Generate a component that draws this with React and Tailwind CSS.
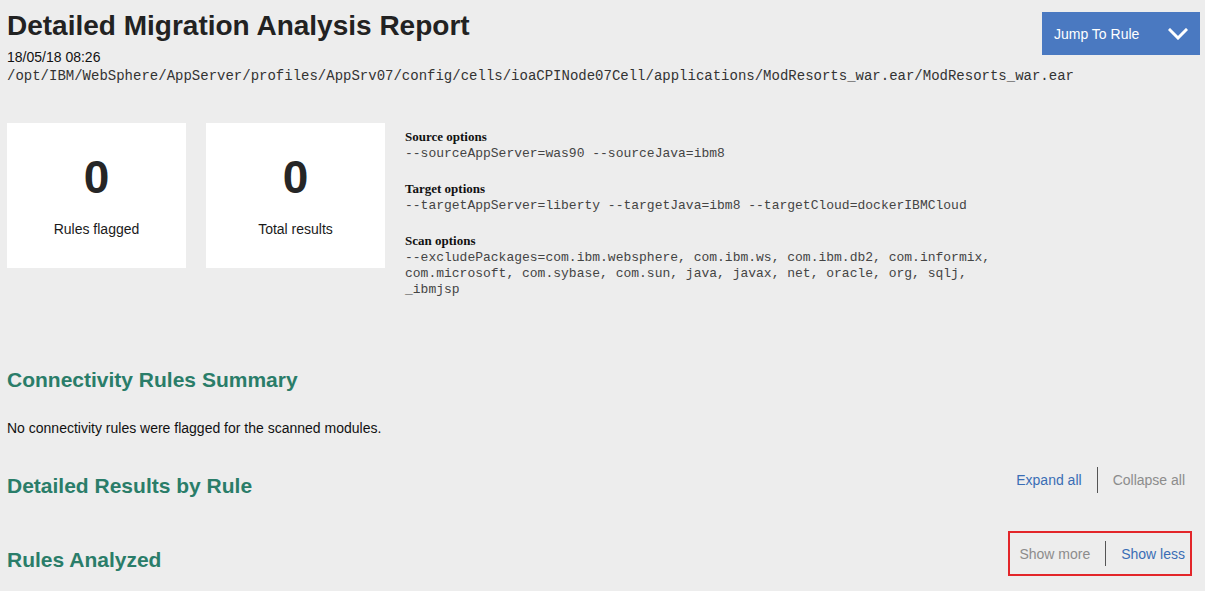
import React from 'react';

const stats = [
  { value: 0, label: 'Rules flagged' },
  { value: 0, label: 'Total results' },
];

const options = [
  { title: 'Source options', lines: ['--sourceAppServer=was90 --sourceJava=ibm8'] },
  { title: 'Target options', lines: ['--targetAppServer=liberty --targetJava=ibm8 --targetCloud=dockerIBMCloud'] },
  {
    title: 'Scan options',
    lines: [
      '--excludePackages=com.ibm.websphere, com.ibm.ws, com.ibm.db2, com.informix,',
      'com.microsoft, com.sybase, com.sun, java, javax, net, oracle, org, sqlj,',
      '_ibmjsp',
    ],
  },
];

const ToggleLinks = ({ left, right, leftActive, boxed }) => (
  <div
    className={`flex items-center text-[14px] ${
      boxed ? 'border-2 border-[#e3262a] pl-[9px] pr-[5px] py-[8px]' : 'pr-[15px]'
    }`}
  >
    <span className={`pr-[15px] leading-[18px] ${leftActive ? 'text-[#3a6db5]' : 'text-[#8c8c8c]'}`}>{left}</span>
    <span className={`w-px bg-[#555] ${boxed ? 'h-[25px]' : 'h-[26px]'}`} />
    <span className={`pl-[15px] leading-[18px] ${leftActive ? 'text-[#8c8c8c]' : 'text-[#3a6db5]'}`}>{right}</span>
  </div>
);

const App = () => {
  return (
    <div className="min-h-screen bg-[#ededed] pl-[7px] pr-[5px] text-[#1a1a1a] font-['Liberation_Sans',Arial,sans-serif]">
      <div className="flex justify-between items-start">
        <div>
          <h1 className="pt-[10px] text-[28px] leading-[32px] font-bold text-[#222]">Detailed Migration Analysis Report</h1>
          <p className="mt-[6px] text-[14px] leading-[18px] text-[#111]">18/05/18 08:26</p>
        </div>
        <button className="mt-[12px] w-[158px] h-[43px] bg-[#4a79c1] text-white text-[14px] flex items-center justify-between pl-[12px] pr-[12px] pt-px">
          <span>Jump To Rule</span>
          <svg width="20" height="12" viewBox="0 0 20 12" fill="none">
            <polyline points="2,2 10,10 18,2" stroke="white" strokeWidth="3" strokeLinecap="square" />
          </svg>
        </button>
      </div>
      <p className="mt-px text-[14px] leading-[18px] text-[#333] font-['Liberation_Mono','Courier_New',monospace]">
        /opt/IBM/WebSphere/AppServer/profiles/AppSrv07/config/cells/ioaCPINode07Cell/applications/ModResorts_war.ear/ModResorts_war.ear
      </p>

      <div className="mt-[38px] flex gap-[20px] items-start">
        {stats.map((s) => (
          <div key={s.label} className="w-[179px] h-[145px] bg-white flex flex-col items-center pt-[31px]">
            <span className="text-[46px] leading-[46px] font-bold text-[#262626]">{s.value}</span>
            <span className="mt-[20px] text-[14px] leading-[18px] text-[#1a1a1a]">{s.label}</span>
          </div>
        ))}
        <div className="pt-[5px] flex flex-col gap-[18px]">
          {options.map((o) => (
            <div key={o.title}>
              <h3 className="text-[13px] leading-[18px] font-bold text-[#111] font-['Liberation_Serif','Times_New_Roman',serif]">{o.title}</h3>
              {o.lines.map((l) => (
                <p key={l} className="text-[13px] leading-[16px] text-[#444] whitespace-pre font-['Liberation_Mono','Courier_New',monospace]">
                  {l}
                </p>
              ))}
            </div>
          ))}
        </div>
      </div>

      <h2 className="mt-[70px] text-[21px] leading-[24px] font-bold text-[#2a7d69]">Connectivity Rules Summary</h2>
      <p className="mt-[27px] text-[14px] leading-[18px] text-[#111]">No connectivity rules were flagged for the scanned modules.</p>

      <div className="mt-[30px] flex justify-between items-start">
        <h2 className="mt-[7px] text-[21px] leading-[24px] font-bold text-[#2a7d69]">Detailed Results by Rule</h2>
        <ToggleLinks left="Expand all" right="Collapse all" leftActive />
      </div>

      <div className="mt-[33px] flex justify-between items-start">
        <h2 className="mt-[17px] text-[21px] leading-[24px] font-bold text-[#2a7d69]">Rules Analyzed</h2>
        <div className="mr-[8px]">
          <ToggleLinks left="Show more" right="Show less" boxed />
        </div>
      </div>
    </div>
  );
};

export default App;
